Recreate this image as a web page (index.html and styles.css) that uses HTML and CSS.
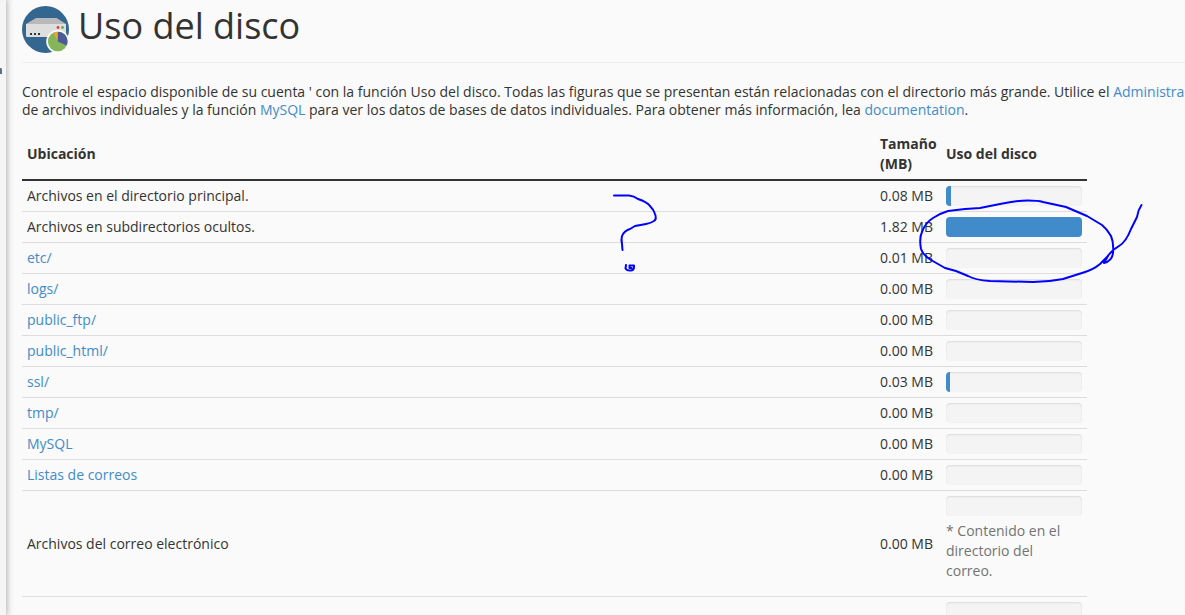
FILE: index.html
```
<!DOCTYPE html>
<html lang="es">
<head>
  <meta charset="UTF-8">
  <title>Uso del disco</title>
  <meta name="viewport" content="width=device-width, initial-scale=1.0">
  <link rel="stylesheet" href="styles.css">
</head>
<body>
  <div class="sidebar">
    <svg class="sidebar-mark" width="2" height="6" viewBox="0 0 2 6" aria-hidden="true"><path d="M0 0h1q1 0 1 2v4H0z" fill="#5c7083"/></svg>
  </div>

  <main class="content">
    <h1 class="page-header">
      <svg class="page-icon" width="48" height="48" viewBox="0 0 48 48" aria-hidden="true">
        <circle cx="23.5" cy="23.5" r="23.5" fill="#34678f"/>
        <path d="M14 12h20.500l9.500 6H4z" fill="#b9b9b9"/>
        <path d="M4 18h40v11.500a1.500 1.500 0 0 1-1.500 1.500h-37A1.500 1.500 0 0 1 4 29.500z" fill="#dedede"/>
        <path d="M8 27h2v2H8zM12 27h2v2h-2zM16 27h2v2h-2z" fill="#263744"/>
        <circle cx="36" cy="21.500" r="1.400" fill="#d9463c"/>
        <circle cx="40.500" cy="21.500" r="1.400" fill="#6ea644"/>
        <circle cx="35.700" cy="35.500" r="11.500" fill="#fafafa"/>
        <circle cx="35.700" cy="35.500" r="9.800" fill="#84b558"/>
        <path d="M35.700 35.500V25.700a9.800 9.800 0 0 1 9 13.700z" fill="#4c5b97"/>
        <path d="M35.700 35.500L31.600 26.600a9.800 9.800 0 0 1 4.100-.9z" fill="#f0a22e"/>
      </svg>
      <span>Uso del disco</span>
    </h1>

    <p class="description">
      Controle el espacio disponible de su cuenta ' con la función Uso del disco. Todas las figuras que se presentan están relacionadas con el directorio más grande. Utilice el <a href="#">Administrador</a><br>
      de archivos individuales y la función <a href="#">MySQL</a> para ver los datos de bases de datos individuales. Para obtener más información, lea <a href="#">documentation</a>.
    </p>

    <table class="usage-table">
      <thead>
        <tr>
          <th class="col-location">Ubicación</th>
          <th class="col-size">Tamaño (MB)</th>
          <th class="col-usage">Uso del disco</th>
        </tr>
      </thead>
      <tbody>
        <tr>
          <td>Archivos en el directorio principal.</td>
          <td class="size">0.08 MB</td>
          <td><div class="progress"><div class="progress-bar" style="width: 4%"></div></div></td>
        </tr>
        <tr>
          <td>Archivos en subdirectorios ocultos.</td>
          <td class="size">1.82 MB</td>
          <td><div class="progress"><div class="progress-bar" style="width: 100%"></div></div></td>
        </tr>
        <tr>
          <td><a href="#">etc/</a></td>
          <td class="size">0.01 MB</td>
          <td><div class="progress"></div></td>
        </tr>
        <tr>
          <td><a href="#">logs/</a></td>
          <td class="size">0.00 MB</td>
          <td><div class="progress"></div></td>
        </tr>
        <tr>
          <td><a href="#">public_ftp/</a></td>
          <td class="size">0.00 MB</td>
          <td><div class="progress"></div></td>
        </tr>
        <tr>
          <td><a href="#">public_html/</a></td>
          <td class="size">0.00 MB</td>
          <td><div class="progress"></div></td>
        </tr>
        <tr>
          <td><a href="#">ssl/</a></td>
          <td class="size">0.03 MB</td>
          <td><div class="progress"><div class="progress-bar" style="width: 3%"></div></div></td>
        </tr>
        <tr>
          <td><a href="#">tmp/</a></td>
          <td class="size">0.00 MB</td>
          <td><div class="progress"></div></td>
        </tr>
        <tr>
          <td><a href="#">MySQL</a></td>
          <td class="size">0.00 MB</td>
          <td><div class="progress"></div></td>
        </tr>
        <tr>
          <td><a href="#">Listas de correos</a></td>
          <td class="size">0.00 MB</td>
          <td><div class="progress"></div></td>
        </tr>
        <tr>
          <td>Archivos del correo electrónico</td>
          <td class="size">0.00 MB</td>
          <td>
            <div class="progress"></div>
            <p class="help-block">* Contenido en el directorio del correo.</p>
          </td>
        </tr>
        <tr>
          <td></td>
          <td></td>
          <td><div class="progress"></div></td>
        </tr>
      </tbody>
    </table>
  </main>

  <!-- Pen marks drawn over the table -->
  <svg class="pen pen-question" width="50" height="84" viewBox="610 190 50 84" aria-hidden="true">
    <path d="M614 195.500H629Q634 196 638 199Q647 202 650 206Q654 210 655 214Q657 219 654 221Q651 223 646 224L635 226L630 229Q624 231 622 236Q621 239 622 244L622.500 250"/>
    <path d="M626 265L625.500 268.500Q627 271 631 270.500Q634.500 270 634 265.500H629.500V268L631.500 268"/>
  </svg>
  <svg class="pen pen-circle" width="230" height="90" viewBox="916 197 230 90" aria-hidden="true">
    <path d="M1141.500 205Q1138 210 1137 217L1131 229Q1126 242 1119 246Q1112 250 1107 257L1100 264Q1093 270 1082 273L1063 279Q1048 282 1033 282L990 281Q975 280 968 276L956 271L945 268L931 260Q923 255 921 249Q919 238 922 232Q925 223 933 218Q941 213 948 211L965 209L980 208L1000 204Q1017 200.500 1028 200.500Q1038 200.500 1043 202L1066 207L1087 216L1102 225Q1107 229 1111 236Q1114 243 1113 253Q1112 261 1104 263L1108 256"/>
  </svg>
</body>
</html>
```
FILE: styles.css
```
* {
  box-sizing: border-box;
}

body {
  margin: 0;
  height: 100vh;
  display: flex;
  overflow: hidden;
  background: #fafafa;
  color: #333;
  font-family: "Open Sans", "Noto Sans", sans-serif;
  font-size: 14px;
  line-height: 20px;
}

a {
  color: #428bca;
  text-decoration: none;
}

a:hover {
  text-decoration: underline;
}

.sidebar {
  flex: 0 0 6px;
  padding-top: 68px;
  background: #f5f5f5;
  box-shadow: 0 0 6px 1px rgba(0, 0, 0, 0.3);
}

.sidebar-mark {
  display: block;
}

.content {
  flex: 1;
  min-width: 0;
  padding-left: 16px;
}

.page-header {
  display: flex;
  gap: 8px;
  height: 63px;
  margin: 0 0 20px;
  border-bottom: 1px solid #eee;
  font-size: 36px;
  font-weight: 400;
  line-height: 52px;
}

.page-icon {
  flex: none;
  margin-top: 6px;
}

.description {
  margin: 0 0 10px;
  line-height: 18px;
  white-space: nowrap;
}

.usage-table {
  width: calc(100% - 98px);
  table-layout: fixed;
  border-collapse: separate;
  border-spacing: 0;
}

.usage-table th,
.usage-table td {
  padding: 5px;
  text-align: left;
  vertical-align: middle;
}

.usage-table th {
  border-bottom: 2px solid #333;
  font-weight: 700;
}

.usage-table td {
  border-bottom: 1px solid #ddd;
}

.col-size {
  width: 66px;
}

.col-usage {
  width: 146px;
}

.size {
  white-space: nowrap;
}

.progress {
  height: 20px;
  overflow: hidden;
  border-radius: 4px;
  background: #f4f4f4;
  box-shadow: inset 0 1px 2px rgba(0, 0, 0, 0.1);
}

.progress-bar {
  height: 100%;
  background: #428bca;
}

.help-block {
  margin: 5px 0 10px;
  color: #737373;
}

.pen {
  position: absolute;
  fill: none;
  stroke: #00f;
  stroke-width: 2;
  stroke-linecap: round;
  stroke-linejoin: round;
}

.pen-question {
  left: 610px;
  top: 190px;
}

.pen-circle {
  left: 916px;
  top: 197px;
}
```
